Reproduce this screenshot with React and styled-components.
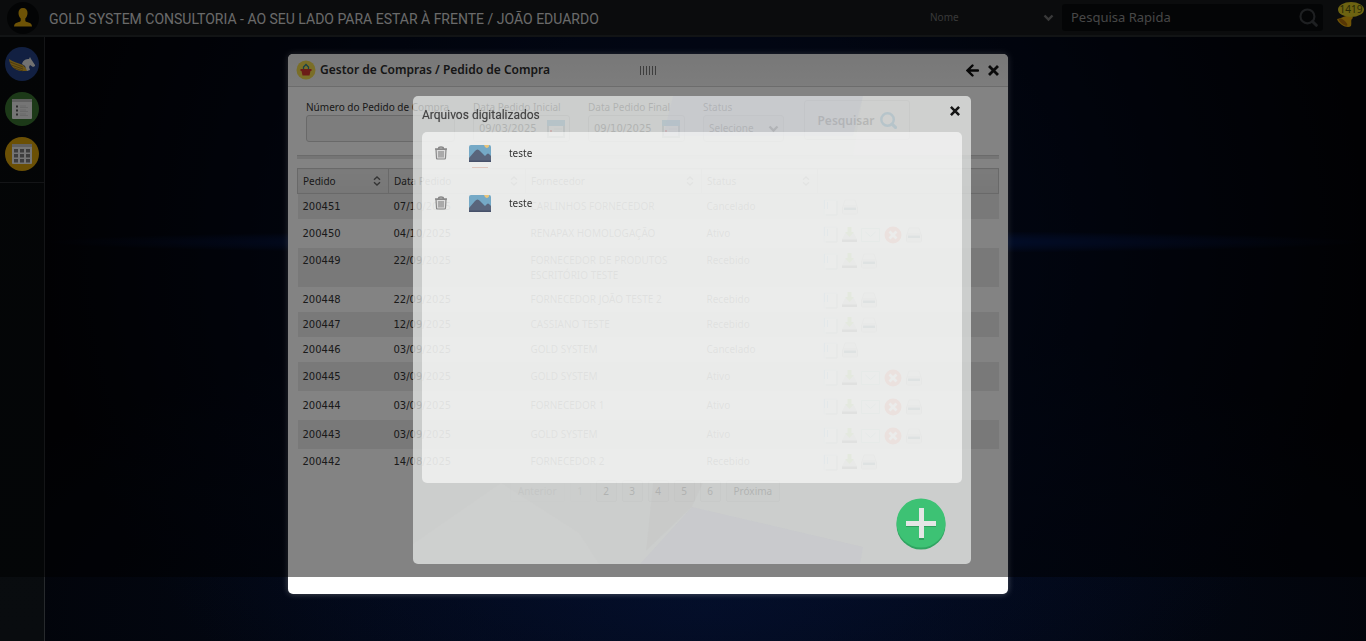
import React from "react";
import styled, { createGlobalStyle } from "styled-components";

const GlobalStyle = createGlobalStyle`
  * { box-sizing: border-box; }
  body {
    margin: 0;
    background: #010204;
    font-family: "Noto Sans", "Open Sans", sans-serif;
    font-size: 10px;
    line-height: 15px;
    color: #333;
  }
  button, input, select { font: inherit; color: inherit; }
`;

const Page = styled.div`
  min-height: 100vh;
  display: flex;
  flex-direction: column;
`;

const TopBar = styled.header`
  height: 37px;
  flex: none;
  display: flex;
  align-items: center;
  padding: 0 2px 0 7px;
  background: #16191b;
  border-bottom: 2px solid #24272a;
`;

const Avatar = styled.span`
  width: 32px;
  height: 32px;
  border-radius: 50%;
  background: #07090a;
  display: flex;
  align-items: center;
  justify-content: center;
`;

const CompanyTitle = styled.h1`
  flex: 1;
  margin: 3px 0 0 10px;
  font: 400 14px/20px Roboto, "Open Sans", sans-serif;
  white-space: nowrap;
  color: #cfcfcf;
`;

const FilterWrap = styled.div`
  position: relative;
  width: 132px;
  display: flex;
  align-items: center;
  justify-content: space-between;
  padding-right: 8px;
  color: #6f6f6f;
`;

const PlainSelect = styled.select`
  appearance: none;
  border: 0;
  padding: 0;
  flex: 1;
  background: transparent;
  outline: none;
`;

const SearchBox = styled.div`
  width: 261px;
  height: 27px;
  display: flex;
  align-items: center;
  padding: 0 5px 0 9px;
  border-radius: 3px;
  background: #090b0d;
`;

const SearchInput = styled.input`
  flex: 1;
  min-width: 0;
  border: 0;
  padding: 0;
  background: transparent;
  font-size: 13px;
  &::placeholder { color: #8a8a8a; opacity: 1; }
`;

const IconButton = styled.button`
  border: 0;
  padding: 0;
  background: none;
  display: flex;
  align-items: center;
  justify-content: center;
`;

const BellButton = styled(IconButton)`
  position: relative;
  width: 27px;
  height: 28px;
  margin-left: 14px;
`;

const BellCount = styled.span`
  position: absolute;
  top: -2px;
  right: 0;
  min-width: 26px;
  height: 15px;
  border-radius: 50%;
  background: #d4c022;
  color: #50500c;
  text-align: center;
`;

const Body = styled.div`
  flex: 1;
  display: flex;
`;

const SideBar = styled.nav`
  width: 45px;
  flex: none;
  background: linear-gradient(#080b0d, #090c0f);
  border-right: 1px solid #272a2d;
`;

const SideGroup = styled.div`
  display: flex;
  flex-direction: column;
  align-items: center;
  gap: 11px;
  padding: 10px 0 11px;
  border-bottom: 1px solid #272a2d;
`;

const SideButton = styled(IconButton)`
  width: 34px;
  height: 34px;
  border-radius: 50%;
  background: ${(p) => p.$tone};
`;

const Desktop = styled.main`
  position: relative;
  flex: 1;
  background:
    radial-gradient(ellipse 50% 12px at 50% 205px, rgba(8, 60, 190, 0.5), transparent),
    radial-gradient(ellipse 50% 100% at 50% 35%, rgba(8, 34, 100, 0.5), rgba(4, 14, 46, 0.35) 70%, transparent),
    radial-gradient(ellipse 60% 50% at 50% 95%, #030c20, transparent),
    #020307;
`;

const AppWindow = styled.section`
  position: absolute;
  left: 243px;
  top: 17px;
  width: 720px;
  height: 540px;
  border-radius: 5px;
  background: #fff;
  box-shadow: 0 0 6px rgba(255, 255, 255, 0.3);
`;

const WindowBar = styled.header`
  height: 33px;
  display: grid;
  grid-template-columns: 1fr auto 1fr;
  align-items: center;
  padding: 0 9px 0 8px;
  border-radius: 5px 5px 0 0;
  border-bottom: 1px solid #d2d2d2;
  background: linear-gradient(#e9e9e9, #f3f3f3);
`;

const WindowTitle = styled.h2`
  margin: 0;
  display: flex;
  align-items: center;
  gap: 4px;
  font: 600 12px/18px "Noto Sans", "Open Sans", sans-serif;
  color: #2c2c2c;
  white-space: nowrap;
`;

const Grip = styled.span`
  width: 16px;
  height: 9px;
  background: repeating-linear-gradient(90deg, #777 0 1px, transparent 1px 3px);
`;

const WindowActions = styled.div`
  display: flex;
  justify-content: flex-end;
  gap: 9px;
`;

const SearchForm = styled.form`
  display: flex;
  align-items: flex-start;
  gap: 18px;
  margin: 0 9px;
  padding: 13px 9px 14px;
  border-bottom: 3px solid #e3e3e3;
  box-shadow: inset 0 -1px 0 #d0d0d0;
`;

const Field = styled.div`
  display: flex;
  flex-direction: column;
  width: ${(p) => p.$width};
`;

const FieldBox = styled.div`
  height: 27px;
  display: flex;
  align-items: center;
  padding: 0 4px 0 5px;
  border: 1px solid #ccc;
  border-radius: 3px;
  background: ${(p) => (p.$shade ? "#f4f4f4" : "#fafafa")};
`;

const FieldInput = styled.input`
  flex: 1;
  min-width: 0;
  border: 0;
  padding: 0;
  background: none;
  font-family: "DejaVu Sans", sans-serif;
`;

const SubmitButton = styled.button`
  width: 106px;
  height: 40px;
  display: flex;
  align-items: center;
  justify-content: center;
  gap: 5px;
  margin-left: 2px;
  border: 1px solid #ccc;
  border-radius: 3px;
  background: #fafafa;
  font-size: 12px;
  font-weight: 600;
`;

const Orders = styled.table`
  width: 702px;
  margin: 9px 9px 0;
  border-collapse: collapse;
  table-layout: fixed;
`;

const HeadCell = styled.th`
  height: 25px;
  width: ${(p) => p.$width};
  padding: 0 7px 0 5px;
  border: 1px solid #ccc;
  background: linear-gradient(#f0f0f0, #e8e8e8);
  font-weight: 400;
  text-align: left;
`;

const HeadLabel = styled.span`
  display: flex;
  align-items: center;
  justify-content: space-between;
`;

const OrderRow = styled.tr`
  height: 25px;
  &:nth-child(odd) { background: #ececec; }
`;

const Cell = styled.td`
  padding: ${(p) => (p.$tall ? "7px 5px 5px" : "5px 5px 4px")};
  vertical-align: top;
`;

const NumberCell = styled(Cell)`
  font-family: "DejaVu Sans", sans-serif;
`;

const RowIcons = styled.div`
  height: ${(p) => (p.$tall ? "17px" : "16px")};
  display: flex;
  align-items: center;
  gap: 4px;
`;

const Pager = styled.nav`
  display: flex;
  justify-content: center;
  gap: 5px;
  padding: 6px 6px 0 0;
`;

const PageButton = styled.button`
  height: 22px;
  min-width: 21px;
  padding: 0 ${(p) => (p.$wide ? "7px" : "0")};
  border: 1px solid #ddd;
  border-radius: 2px;
  background: #f4f4f4;
  color: #333;
  &:disabled { opacity: 0.3; }
`;

const Shade = styled.div`
  position: fixed;
  inset: 0 0 auto 0;
  height: 90vh;
  background: rgba(0, 0, 0, 0.486);
`;

const Dialog = styled.section`
  position: absolute;
  left: 413px;
  top: 96px;
  width: 558px;
  height: 468px;
  display: flex;
  flex-direction: column;
  padding: 8px 9px 14px;
  border-radius: 5px;
  overflow: hidden;
  background: rgba(230, 232, 231, 0.74);
`;

const DialogArt = styled.svg`
  position: absolute;
  inset: 0;
  width: 100%;
  height: 100%;
`;

const DialogBar = styled.header`
  position: relative;
  height: 28px;
  display: flex;
  align-items: flex-start;
  justify-content: space-between;
`;

const DialogTitle = styled.h3`
  margin: 2px 0 0;
  font: 400 12px/18px Roboto, "Open Sans", sans-serif;
  color: #444;
  text-shadow: 0 0 1px #888;
`;

const CloseSlot = styled.div`
  padding: 2px 2px 0 0;
`;

const FileList = styled.ul`
  position: relative;
  height: 351px;
  margin: 0;
  padding: 0;
  list-style: none;
  border-radius: 5px;
  background: rgba(255, 255, 255, 0.6);
`;

const FileRow = styled.li`
  height: 50px;
  display: flex;
  padding: 12px 12px 0;
  line-height: 18px;
`;

const FileIcons = styled.div`
  display: flex;
  align-items: flex-start;
  gap: 21px;
  width: 75px;
`;

const AddButton = styled(IconButton)`
  position: relative;
  align-self: flex-end;
  width: 50px;
  height: 52px;
  margin: 15px 16px 0 0;
`;

const Chevron = () => (
  <svg width="11" height="8" viewBox="0 0 11 8" aria-hidden="true">
    <path d="M1.5 1.5l4 4 4-4" fill="none" stroke="currentColor" strokeWidth="2.4" />
  </svg>
);

const Cross = ({ size }) => (
  <svg width={size} height={size} viewBox="0 0 11 11" aria-hidden="true">
    <path d="M2 2l7 7M9 2l-7 7" stroke="#151515" strokeWidth="2.8" strokeLinecap="square" />
  </svg>
);

const Lens = ({ color, size, stroke }) => (
  <svg width={size} height={size} viewBox="0 0 18 18" aria-hidden="true">
    <circle cx="8" cy="8" r="6.6" fill="none" stroke={color} strokeWidth={stroke} />
    <path d="M12.8 12.8l3.6 3.6" stroke={color} strokeWidth={stroke + 0.8} strokeLinecap="round" />
  </svg>
);

const Calendar = () => (
  <svg width="18" height="19" viewBox="0 0 18 19" aria-hidden="true">
    <rect x="1" y="2" width="16" height="16" fill="#fff" stroke="#8d9aa3" strokeWidth="2" />
    <rect x="0" y="1" width="18" height="6" rx="1" fill="#5aa9d6" />
    <rect x="3" y="11" width="2" height="2" fill="#e33" />
    <path d="M7 10h8M7 13h8" stroke="#d5dde2" />
  </svg>
);

const Sort = () => (
  <svg width="8" height="10" viewBox="0 0 8 10" aria-hidden="true">
    <path d="M1 3.8L4 1l3 2.8M1 6.2L4 9l3-2.8" fill="none" stroke="#666" strokeWidth="1.4" />
  </svg>
);

const ICONS = {
  doc: (
    <svg width="15" height="17" viewBox="0 0 15 17">
      <path d="M1 1h13v15H1z" fill="#f6f6f6" stroke="#c4dbe4" />
      <path d="M14 2v14H3" fill="none" stroke="#999" />
      <path d="M1.500 1v9M4.500 3v7" stroke="#6bbbe8" />
    </svg>
  ),
  save: (
    <svg width="15" height="16" viewBox="0 0 15 16">
      <path d="M3 6h9l3 6v3H0v-3z" fill="#c2c2c2" />
      <path d="M0 12.500h15V15H0z" fill="#444" />
      <path d="M5.500 0h4v5h2.500l-4.500 5L3 5h2.500z" fill="#7cc62e" />
    </svg>
  ),
  mail: (
    <svg width="19" height="14" viewBox="0 0 19 14">
      <path d="M.5.5h18v13H.5z" fill="#eff4f3" stroke="#a3d0cc" />
      <path d="M4.500 4l5 4.500 5-4.500" fill="none" stroke="#8fc4c0" />
    </svg>
  ),
  cancel: (
    <svg width="18" height="18" viewBox="0 0 18 18">
      <circle cx="9" cy="9" r="8.500" fill="#f0341a" />
      <path d="M5.500 5.500l7 7M12.500 5.500l-7 7" stroke="#fff" strokeWidth="2.800" />
    </svg>
  ),
  print: (
    <svg width="16" height="16" viewBox="0 0 16 16">
      <path d="M3 1h10l2 6H1z" fill="#eee" stroke="#bbb" />
      <rect x=".5" y="7" width="15" height="8" rx="1" fill="#ddd" stroke="#aaa" />
      <rect x="2" y="8.500" width="12" height="2.500" fill="#21465e" />
    </svg>
  ),
};

const ICON_LABELS = {
  doc: "Detalhes",
  save: "Baixar",
  mail: "Enviar e-mail",
  cancel: "Cancelar",
  print: "Imprimir",
};

const CLOSED = ["doc", "print"];
const ACTIVE = ["doc", "save", "mail", "cancel", "print"];
const RECEIVED = ["doc", "save", "print"];

const ORDERS = [
  ["200451", "07/10/2025", "CARLINHOS FORNECEDOR", "Cancelado", CLOSED],
  ["200450", "04/10/2025", "RENAPAX HOMOLOGAÇÃO", "Ativo", ACTIVE],
  ["200449", "22/09/2025", "FORNECEDOR DE PRODUTOS ESCRITÓRIO TESTE", "Recebido", RECEIVED],
  ["200448", "22/09/2025", "FORNECEDOR JOÃO TESTE 2", "Recebido", RECEIVED],
  ["200447", "12/09/2025", "CASSIANO TESTE", "Recebido", RECEIVED],
  ["200446", "03/09/2025", "GOLD SYSTEM", "Cancelado", CLOSED],
  ["200445", "03/09/2025", "GOLD SYSTEM", "Ativo", ACTIVE],
  ["200444", "03/09/2025", "FORNECEDOR 1", "Ativo", ACTIVE],
  ["200443", "03/09/2025", "GOLD SYSTEM", "Ativo", ACTIVE],
  ["200442", "14/08/2025", "FORNECEDOR 2", "Recebido", RECEIVED],
];

const COLUMNS = [
  ["Pedido", "91px"],
  ["Data Pedido", "137px"],
  ["Fornecedor", "176px"],
  ["Status", "116px"],
];

const FILES = [
  { id: 1, name: "teste", marked: true },
  { id: 2, name: "teste", marked: false },
];

function DateField({ id, label, value }) {
  return (
    <Field $width="97px">
      <label htmlFor={id}>{label}</label>
      <FieldBox>
        <FieldInput id={id} defaultValue={value} />
        <IconButton type="button" aria-label="Abrir calendário">
          <Calendar />
        </IconButton>
      </FieldBox>
    </Field>
  );
}

function Header() {
  return (
    <TopBar>
      <Avatar>
        <svg width="18" height="19" viewBox="0 0 18 19" aria-hidden="true">
          <path
            d="M9 0c3 0 4.500 2 4.500 5 0 2.500-1 4.500-2.200 5.600v2c0 1 1 1.400 3.200 2 2.200.6 3.200 1.400 3.500 3.900H0c.3-2.500 1.300-3.300 3.500-3.900 2.200-.6 3.200-1 3.200-2v-2C5.500 9.500 4.500 7.500 4.500 5c0-3 1.500-5 4.500-5z"
            fill="#d6a10c"
          />
        </svg>
      </Avatar>
      <CompanyTitle>GOLD SYSTEM CONSULTORIA - AO SEU LADO PARA ESTAR À FRENTE / JOÃO EDUARDO</CompanyTitle>
      <FilterWrap>
        <PlainSelect aria-label="Campo da pesquisa">
          <option>Nome</option>
        </PlainSelect>
        <Chevron />
      </FilterWrap>
      <SearchBox>
        <SearchInput aria-label="Pesquisa Rapida" placeholder="Pesquisa Rapida" />
        <IconButton type="button" aria-label="Pesquisar">
          <Lens color="#3c3f42" size={19} stroke={2} />
        </IconButton>
      </SearchBox>
      <BellButton type="button" aria-label="Notificações">
        <svg width="27" height="28" viewBox="0 0 27 28" aria-hidden="true">
          <path d="M0 15c4 0 6-3 10-3h5l1 2c-3 2-1 4-2 8-3 3-12-1-14-7z" fill="#dca30c" />
          <ellipse cx="6" cy="18" rx="2" ry="5.500" transform="rotate(-50 6 18)" fill="#a8690a" />
        </svg>
        <BellCount>1419</BellCount>
      </BellButton>
    </TopBar>
  );
}

function SideMenu() {
  return (
    <SideBar>
      <SideGroup>
        <SideButton $tone="#233f80" aria-label="Gold System">
          <svg width="28" height="16" viewBox="0 0 28 16" aria-hidden="true">
            <path d="M1 3c4 3 10 4 14 6l5 5-1 1H13C6 14 2 10 1 3z" fill="#d1a32a" />
            <path d="M2 6l13 5M3 9l12 4M6 12l9 3" stroke="#8d6c1c" strokeWidth=".8" />
            <path d="M14 8c1-4 4-5 7-5l1-2 1 2 4 6v1l-2 1-3-2-1 2 1 3-3 1-2-5z" fill="#ddd" />
          </svg>
        </SideButton>
        <SideButton $tone="#38702f" aria-label="Lista">
          <svg width="20" height="20" viewBox="0 0 20 20" aria-hidden="true">
            <rect width="20" height="20" rx="1" fill="#e4e4e4" />
            <path d="M0 0h20v3H0z" fill="#bcbcbc" />
            <path d="M4 6.500h2v2H4zM4 10.500h2v2H4zM4 14.500h2v2H4z" fill="#555" />
            <path d="M8 7h6M8 8.500h8M8 11h6M8 12.500h8M8 15h6M8 16.500h8" stroke="#ccc" />
          </svg>
        </SideButton>
        <SideButton $tone="#d19c0b" aria-label="Planilha">
          <svg width="20" height="20" viewBox="0 0 20 20" aria-hidden="true">
            <rect width="20" height="20" rx="1" fill="#e4e4e4" />
            <path d="M0 0h20v3H0z" fill="#bcbcbc" />
            <path
              d="M2 5h4v3.500H2zM8 5h4v3.500H8zM14 5h4v3.500h-4zM2 10h4v3.500H2zM8 10h4v3.500H8zM14 10h4v3.500h-4zM2 15h4v3.500H2zM8 15h4v3.500H8zM14 15h4v3.500h-4z"
              fill="#777"
            />
          </svg>
        </SideButton>
      </SideGroup>
    </SideBar>
  );
}

function OrdersWindow() {
  return (
    <AppWindow>
      <WindowBar>
        <WindowTitle>
          <svg width="20" height="20" viewBox="0 0 20 20" aria-hidden="true">
            <circle cx="10" cy="10" r="9.500" fill="#eed64c" />
            <path d="M7.500 10V7l2.500-2.500L12.500 7v3" fill="none" stroke="#2f7f8d" strokeWidth="1.300" />
            <path d="M4.500 9h11v2h-1l-1 4.500h-7l-1-4.500h-1z" fill="#d3382f" />
          </svg>
          Gestor de Compras / Pedido de Compra
        </WindowTitle>
        <Grip />
        <WindowActions>
          <IconButton type="button" aria-label="Voltar">
            <svg width="13" height="13" viewBox="0 0 13 13" aria-hidden="true">
              <path d="M12 6.500H2M6.500 1.500l-5 5 5 5" fill="none" stroke="#0c0c0c" strokeWidth="2.400" strokeLinecap="round" />
            </svg>
          </IconButton>
          <IconButton type="button" aria-label="Fechar janela">
            <Cross size={11} />
          </IconButton>
        </WindowActions>
      </WindowBar>

      <SearchForm onSubmit={(e) => e.preventDefault()}>
        <Field $width="149px">
          <label htmlFor="numero">Número do Pedido de Compra</label>
          <FieldBox $shade>
            <FieldInput id="numero" />
          </FieldBox>
        </Field>
        <DateField id="inicial" label="Data Pedido Inicial" value="09/03/2025" />
        <DateField id="final" label="Data Pedido Final" value="09/10/2025" />
        <Field $width="81px">
          <label htmlFor="status">Status</label>
          <FieldBox $shade>
            <PlainSelect id="status">
              <option>Selecione</option>
            </PlainSelect>
            <Chevron />
          </FieldBox>
        </Field>
        <SubmitButton type="submit">
          Pesquisar
          <Lens color="#3b9fd6" size={17} stroke={2.6} />
        </SubmitButton>
      </SearchForm>

      <Orders>
        <thead>
          <tr>
            {COLUMNS.map(([name, width]) => (
              <HeadCell key={name} $width={width} scope="col">
                <HeadLabel>
                  {name}
                  <Sort />
                </HeadLabel>
              </HeadCell>
            ))}
            <HeadCell aria-label="Ações" />
          </tr>
        </thead>
        <tbody>
          {ORDERS.map(([number, date, supplier, status, icons]) => {
            const tall = icons === ACTIVE;
            return (
              <OrderRow key={number}>
                <NumberCell $tall={tall}>{number}</NumberCell>
                <NumberCell $tall={tall}>{date}</NumberCell>
                <Cell $tall={tall}>{supplier}</Cell>
                <Cell $tall={tall}>{status}</Cell>
                <Cell $tall={tall}>
                  <RowIcons $tall={tall}>
                    {icons.map((name) => (
                      <IconButton key={name} type="button" aria-label={ICON_LABELS[name]}>
                        {ICONS[name]}
                      </IconButton>
                    ))}
                  </RowIcons>
                </Cell>
              </OrderRow>
            );
          })}
        </tbody>
      </Orders>

      <Pager>
        <PageButton $wide disabled>Anterior</PageButton>
        <PageButton disabled>1</PageButton>
        {[2, 3, 4, 5, 6].map((n) => (
          <PageButton key={n}>{n}</PageButton>
        ))}
        <PageButton $wide>Próxima</PageButton>
      </Pager>
    </AppWindow>
  );
}

function FilesDialog() {
  return (
    <Dialog role="dialog" aria-labelledby="files-title">
      <DialogArt viewBox="0 0 558 468" aria-hidden="true">
        <path d="M279 411l171 40-3 17H227z" fill="#b9b9cb" opacity=".2" />
        <path d="M88 387l78 50 20 31H0v-20z" fill="#fff" opacity=".04" />
        <path d="M240 387h50l-11 24-46 44z" fill="#999" opacity=".06" />
        <path d="M260 0h190l-10 40H250z" fill="#b9b9cb" opacity=".18" />
        <path d="M450 0h108v60H440z" fill="#fff" opacity=".06" />
      </DialogArt>
      <DialogBar>
        <DialogTitle id="files-title">Arquivos digitalizados</DialogTitle>
        <CloseSlot>
          <IconButton type="button" aria-label="Fechar">
            <Cross size={10} />
          </IconButton>
        </CloseSlot>
      </DialogBar>
      <FileList>
        {FILES.map((file) => (
          <FileRow key={file.id}>
            <FileIcons>
              <IconButton type="button" aria-label="Excluir">
                <svg width="14" height="17" viewBox="0 0 14 17" aria-hidden="true">
                  <path d="M1 5h12M4.500 4.500c0-2 5-2 5 0" fill="none" stroke="#888" strokeWidth="1.400" />
                  <path d="M2 5.500h10l-.5 8.500q0 1-1 1h-7q-1 0-1-1z" fill="#ddd" stroke="#888" strokeWidth="1.200" />
                  <path d="M5 7v6.500M7 7v6.500M9 7v6.500" stroke="#777" />
                </svg>
              </IconButton>
              <IconButton type="button" aria-label="Abrir imagem">
                <svg width="22" height="24" viewBox="0 0 22 24" aria-hidden="true">
                  <path d="M2 1h18q2 0 2 2v15H0V3q0-2 2-2z" fill="#75a9c6" />
                  <path d="M15 1h5v1.500q-1 1.500-2.500 1.500T15 1z" fill="#e8c57c" />
                  <path d="M0 14l6-7q2.500-3 5 0l5 5 2-2q1-1 2 0l2 2v6H0z" fill="#59657c" />
                  <path d="M0 16.500h22V18H0z" fill="#465069" />
                  {file.marked && <path d="M3 23.500h16" stroke="#dfc6bd" />}
                </svg>
              </IconButton>
            </FileIcons>
            {file.name}
          </FileRow>
        ))}
      </FileList>
      <AddButton type="button" aria-label="Adicionar arquivo">
        <svg width="50" height="52" viewBox="0 0 50 52" aria-hidden="true">
          <ellipse cx="25" cy="27" rx="24.500" ry="24.500" fill="#30a461" />
          <ellipse cx="25" cy="25" rx="24.500" ry="24.500" fill="#3dc274" />
          <path d="M23 12h5v14h12v3H28v13h-5V29H10v-3h13z" fill="#2f9f5d" />
          <path d="M23 10h5v13h12v5H28v12h-5V28H10v-5h13z" fill="#e4e6e5" />
        </svg>
      </AddButton>
    </Dialog>
  );
}

export default function App() {
  return (
    <Page>
      <GlobalStyle />
      <Header />
      <Body>
        <SideMenu />
        <Desktop>
          <OrdersWindow />
        </Desktop>
      </Body>
      <Shade>
        <FilesDialog />
      </Shade>
    </Page>
  );
}
